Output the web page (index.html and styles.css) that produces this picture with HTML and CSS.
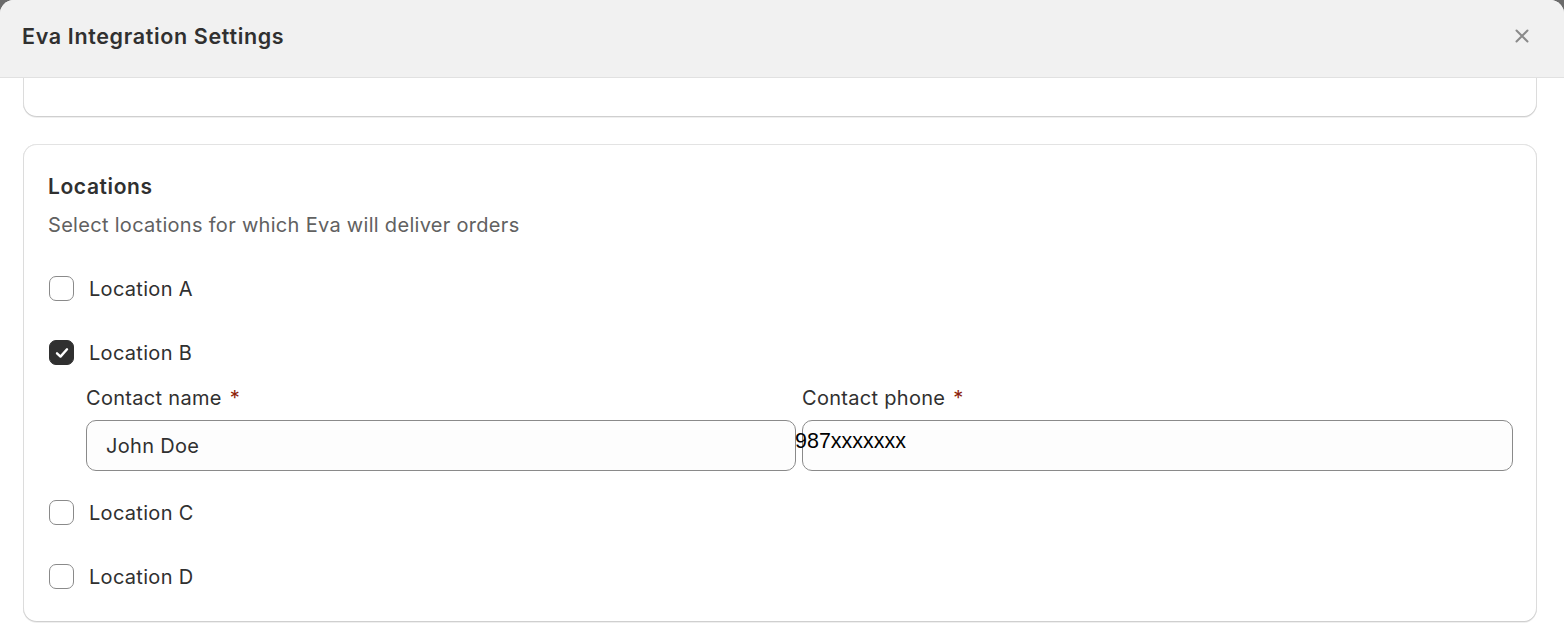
FILE: index.html
```html
<!DOCTYPE html>
<html lang="en">
<head>
<meta charset="utf-8">
<title>Eva Integration Settings</title>
<link rel="stylesheet" href="styles.css">
</head>
<body>
<div class="modal">
  <header class="modal-header">
    <h1 class="modal-title">Eva Integration Settings</h1>
    <button class="close-btn" aria-label="Close">
      <svg width="16" height="16" viewBox="0 0 16 16"><path d="M2.5 2.5 L13.5 13.5 M13.5 2.5 L2.5 13.5" stroke="#8a8a8a" stroke-width="2" stroke-linecap="round" fill="none"/></svg>
    </button>
  </header>
  <main class="modal-body">
    <section class="card card-prev"></section>
    <section class="card card-locations">
      <h2 class="card-title">Locations</h2>
      <p class="card-sub">Select locations for which Eva will deliver orders</p>
      <div class="loc-list">
        <label class="loc-row">
          <span class="cb"></span>
          <span class="loc-label">Location A</span>
        </label>
        <div class="loc-group">
          <label class="loc-row">
            <span class="cb cb-checked">
              <svg width="18" height="18" viewBox="0 0 18 18"><path d="M4 9.3 L7.5 12.6 L14 5.3" stroke="#fff" stroke-width="2.4" stroke-linecap="round" stroke-linejoin="round" fill="none"/></svg>
            </span>
            <span class="loc-label">Location B</span>
          </label>
          <div class="fields">
            <div class="field">
              <div class="field-label">Contact name <span class="req">*</span></div>
              <div class="input"><span class="input-text">John Doe</span></div>
            </div>
            <div class="field">
              <div class="field-label">Contact phone <span class="req">*</span></div>
              <div class="input input-phone"><span class="phone-text">987xxxxxxx</span></div>
            </div>
          </div>
        </div>
        <label class="loc-row">
          <span class="cb"></span>
          <span class="loc-label">Location C</span>
        </label>
        <label class="loc-row">
          <span class="cb"></span>
          <span class="loc-label">Location D</span>
        </label>
      </div>
    </section>
  </main>
</div>
</body>
</html>
```
FILE: styles.css
```css
* { box-sizing: border-box; }
html, body {
  margin: 0;
  padding: 0;
  height: 100%;
  background: #6b6b6b;
  overflow: hidden;
}
body {
  font-family: Inter, "Noto Sans", sans-serif;
  color: #303030;
}
.modal {
  width: 1564px;
  height: 638px;
  background: #ffffff;
  border-radius: 14px 14px 0 0;
  overflow: hidden;
  display: flex;
  flex-direction: column;
}
.modal-header {
  height: 78px;
  flex: none;
  background: #f1f1f1;
  border-bottom: 1px solid #e1e1e1;
  display: flex;
  align-items: center;
  justify-content: space-between;
  padding: 0 34px 6px 22px;
}
.modal-title {
  margin: 0;
  font-size: 21.5px;
  line-height: 28px;
  font-weight: 600;
  letter-spacing: 0.65px;
  color: #303030;
}
.close-btn {
  border: 0;
  background: none;
  padding: 0;
  width: 16px;
  height: 16px;
  display: flex;
}
.modal-body {
  flex: 1;
  overflow: hidden;
  padding: 0 27px 0 23px;
}
.card {
  background: #fff;
  border-radius: 14px;
  box-shadow: 0 1px 0 0 rgba(26,26,26,0.07), inset 0 1px 0 0 #e3e3e3, inset 0 -1px 0 0 #cfcfcf, inset 1px 0 0 0 #dcdcdc, inset -1px 0 0 0 #dcdcdc;
}
.card-prev {
  height: 70px;
  margin-top: -31px;
}
.card-locations {
  margin-top: 27px;
  padding: 29px 24px 33px 25px;
  display: flex;
  flex-direction: column;
}
.card-title {
  margin: 0;
  font-size: 21px;
  line-height: 28px;
  font-weight: 600;
  letter-spacing: 0.6px;
  color: #303030;
}
.card-sub {
  margin: 12px 0 0;
  font-size: 20px;
  line-height: 24px;
  letter-spacing: 0.3px;
  color: #616161;
}
.loc-list {
  display: flex;
  flex-direction: column;
  margin-top: 39px;
}
.loc-list > * + * {
  margin-top: 39px;
}
.loc-list > .loc-group + .loc-row {
  margin-top: 29px;
}
.loc-row {
  display: flex;
  align-items: center;
  height: 25px;
  gap: 15px;
  padding-left: 1px;
}
.cb {
  width: 25px;
  height: 25px;
  border: 1.5px solid #8a8a8a;
  border-radius: 7px;
  background: #fff;
  flex: none;
  display: flex;
  align-items: center;
  justify-content: center;
}
.cb-checked {
  background: #303030;
  border-color: #303030;
}
.loc-label {
  font-size: 20px;
  letter-spacing: 0.3px;
  color: #303030;
}
.fields {
  display: grid;
  grid-template-columns: 710px 711px;
  column-gap: 6px;
  margin: 22px 0 0 38px;
}
.field-label {
  font-size: 20px;
  line-height: 22px;
  letter-spacing: 0.3px;
  color: #303030;
  margin-bottom: 11px;
}
.req {
  color: #8e1f0b;
  margin-left: 2px;
}
.input {
  height: 51px;
  border: 1px solid #8a8a8a;
  border-radius: 10px;
  background: #fdfdfd;
  display: flex;
  align-items: center;
  padding-left: 19px;
}
.input-text {
  font-size: 20px;
  letter-spacing: 0.3px;
  color: #303030;
  padding-top: 1px;
}
.input-phone {
  padding-left: 0;
  align-items: flex-start;
}
.phone-text {
  font-family: "Liberation Sans", Arial, sans-serif;
  font-size: 21.5px;
  line-height: 24px;
  color: #000;
  margin-left: -8px;
  margin-top: 8px;
}
```
